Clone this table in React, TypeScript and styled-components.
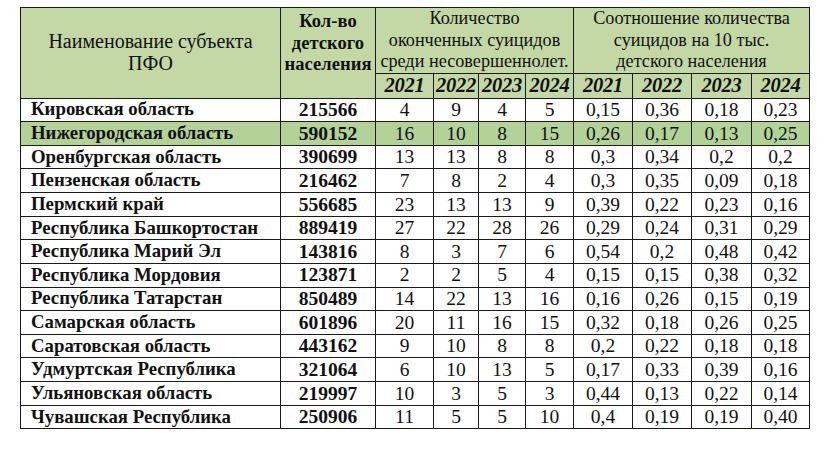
import styled, { createGlobalStyle } from 'styled-components'

const GlobalStyle = createGlobalStyle`
	html, body {
		margin: 0;
		padding: 0;
		background: #ffffff;
		font-family: 'Liberation Serif', serif;
		color: #111;
	}
`

const headerBg = '#c4d8a6'
const markBg = '#b3d298'

type Row = {
	name: string
	population: number
	counts: number[]
	ratios: string[]
	marked?: boolean
}

const rows: Row[] = [
	{ name: 'Кировская область', population: 215566, counts: [4, 9, 4, 5], ratios: ['0,15', '0,36', '0,18', '0,23'] },
	{ name: 'Нижегородская область', population: 590152, counts: [16, 10, 8, 15], ratios: ['0,26', '0,17', '0,13', '0,25'], marked: true },
	{ name: 'Оренбургская область', population: 390699, counts: [13, 13, 8, 8], ratios: ['0,3', '0,34', '0,2', '0,2'] },
	{ name: 'Пензенская область', population: 216462, counts: [7, 8, 2, 4], ratios: ['0,3', '0,35', '0,09', '0,18'] },
	{ name: 'Пермский край', population: 556685, counts: [23, 13, 13, 9], ratios: ['0,39', '0,22', '0,23', '0,16'] },
	{ name: 'Республика Башкортостан', population: 889419, counts: [27, 22, 28, 26], ratios: ['0,29', '0,24', '0,31', '0,29'] },
	{ name: 'Республика Марий Эл', population: 143816, counts: [8, 3, 7, 6], ratios: ['0,54', '0,2', '0,48', '0,42'] },
	{ name: 'Республика Мордовия', population: 123871, counts: [2, 2, 5, 4], ratios: ['0,15', '0,15', '0,38', '0,32'] },
	{ name: 'Республика Татарстан', population: 850489, counts: [14, 22, 13, 16], ratios: ['0,16', '0,26', '0,15', '0,19'] },
	{ name: 'Самарская область', population: 601896, counts: [20, 11, 16, 15], ratios: ['0,32', '0,18', '0,26', '0,25'] },
	{ name: 'Саратовская область', population: 443162, counts: [9, 10, 8, 8], ratios: ['0,2', '0,22', '0,18', '0,18'] },
	{ name: 'Удмуртская Республика', population: 321064, counts: [6, 10, 13, 5], ratios: ['0,17', '0,33', '0,39', '0,16'] },
	{ name: 'Ульяновская область', population: 219997, counts: [10, 3, 5, 3], ratios: ['0,44', '0,13', '0,22', '0,14'] },
	{ name: 'Чувашская Республика', population: 250906, counts: [11, 5, 5, 10], ratios: ['0,4', '0,19', '0,19', '0,40'] },
]

const years = ['2021', '2022', '2023', '2024']
const colWidths = [260, 95, 58, 45, 47, 48, 59, 59, 60, 58]

const Page = styled.div`
	padding: 7px 0 0 20px;
	font-family: 'Liberation Serif', serif;
`

const Table = styled.table`
	border-collapse: collapse;
	table-layout: fixed;
	width: 789px;
	line-height: 1;
	font-family: 'Liberation Serif', serif;
	color: #111;
`

const HeadCell = styled.th<{ $bold?: boolean; $top?: boolean; $size?: number }>`
	background: ${headerBg};
	border: 1px solid #1a1a1a;
	padding: ${({ $top }) => ($top ? '2px 0 0' : '0')};
	font-family: 'Liberation Serif', serif;
	font-size: ${({ $size }) => $size ?? 18.2}px;
	font-weight: ${({ $bold }) => ($bold ? 700 : 400)};
	line-height: 21.5px;
	text-align: center;
	white-space: nowrap;
	vertical-align: ${({ $top }) => ($top ? 'top' : 'middle')};
	height: 64px;
`

const YearCell = styled.th`
	background: ${headerBg};
	border: 1px solid #1a1a1a;
	padding: 0;
	height: 24px;
	font-family: 'Liberation Serif', serif;
	font-size: 20.5px;
	font-weight: 700;
	font-style: italic;
	text-align: center;
	letter-spacing: -0.2px;
`

const DataRow = styled.tr<{ $marked?: boolean }>`
	height: 23.64px;
	background: ${({ $marked }) => ($marked ? markBg : '#ffffff')};
`

const NameCell = styled.td`
	border: 1px solid #1a1a1a;
	padding: 0 0 0 10px;
	font-family: 'Liberation Serif', serif;
	font-size: 18.8px;
	font-weight: 700;
	white-space: nowrap;
`

const NumCell = styled.td<{ $bold?: boolean }>`
	border: 1px solid #1a1a1a;
	padding: 0;
	font-family: 'Liberation Serif', serif;
	font-size: 19.5px;
	font-weight: ${({ $bold }) => ($bold ? 700 : 400)};
	text-align: center;
`

export default function App() {
	return (
		<Page>
			<GlobalStyle />
			<Table>
				<colgroup>
					{colWidths.map((w, i) => (
						<col key={i} style={{ width: w }} />
					))}
				</colgroup>
				<thead>
					<tr>
						<HeadCell rowSpan={2} $size={20}>
							Наименование субъекта
							<br />
							ПФО
						</HeadCell>
						<HeadCell rowSpan={2} $bold $top $size={18.6}>
							Кол-во
							<br />
							детского
							<br />
							населения
						</HeadCell>
						<HeadCell colSpan={4}>
							Количество
							<br />
							оконченных суицидов
							<br />
							среди несовершеннолет.
						</HeadCell>
						<HeadCell colSpan={4}>
							Соотношение количества
							<br />
							суицидов на 10 тыс.
							<br />
							детского населения
						</HeadCell>
					</tr>
					<tr>
						{[...years, ...years].map((y, i) => (
							<YearCell key={i}>{y}</YearCell>
						))}
					</tr>
				</thead>
				<tbody>
					{rows.map((r) => (
						<DataRow key={r.name} $marked={r.marked}>
							<NameCell>{r.name}</NameCell>
							<NumCell $bold>{r.population}</NumCell>
							{r.counts.map((c, i) => (
								<NumCell key={'c' + i}>{c}</NumCell>
							))}
							{r.ratios.map((v, i) => (
								<NumCell key={'r' + i}>{v}</NumCell>
							))}
						</DataRow>
					))}
				</tbody>
			</Table>
		</Page>
	)
}
